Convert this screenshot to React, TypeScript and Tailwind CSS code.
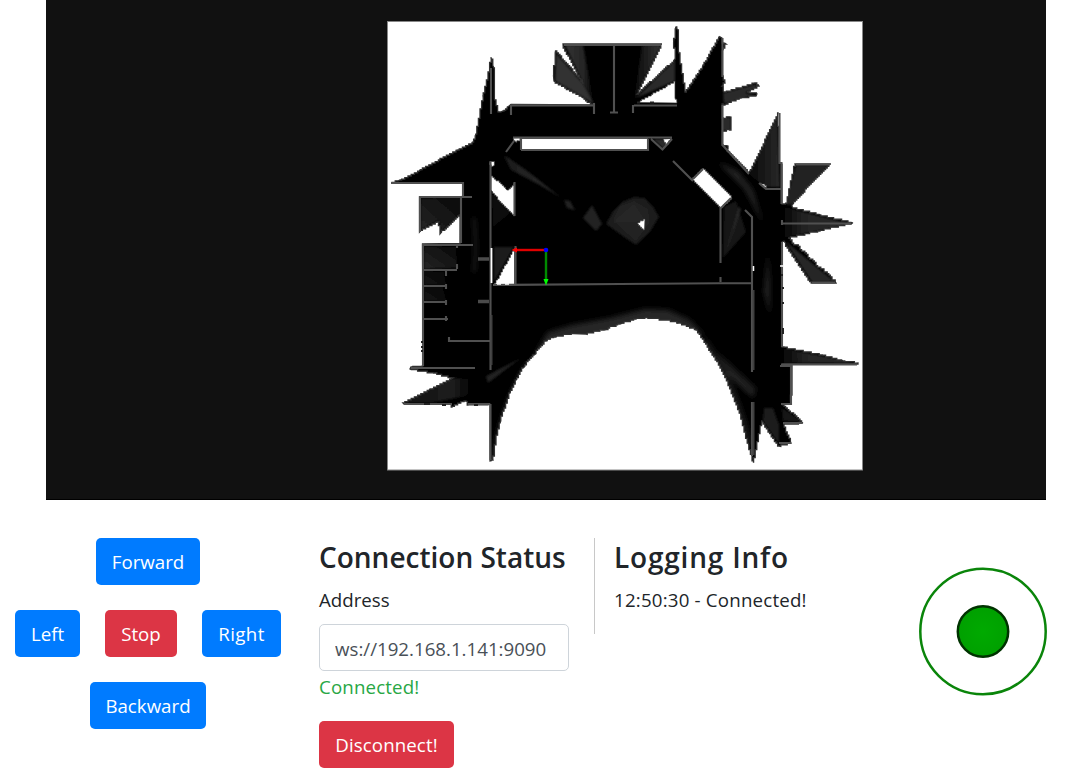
import React from "react";

const CELL = 1.6;

// Turns slanted edges into the stair steps of an occupancy grid.
function toGrid(points: string): string {
  const pts = points.split(" ").map((p) => p.split(",").map(Number));
  const snap = (v: number) => Math.round(v / CELL) * CELL;
  const out: string[] = [];
  pts.forEach(([x0, y0], i) => {
    const [x1, y1] = pts[(i + 1) % pts.length];
    const dx = x1 - x0;
    const dy = y1 - y0;
    out.push(`${x0},${y0}`);
    if (Math.abs(dx) < 1 || Math.abs(dy) < 1) return;
    const n = Math.max(1, Math.round(Math.max(Math.abs(dx), Math.abs(dy)) / CELL));
    let px = x0;
    let py = y0;
    for (let k = 1; k < n; k++) {
      const nx = snap(x0 + (dx * k) / n);
      const ny = snap(y0 + (dy * k) / n);
      out.push(`${nx.toFixed(1)},${py.toFixed(1)}`, `${nx.toFixed(1)},${ny.toFixed(1)}`);
      px = nx;
      py = ny;
    }
    out.push(`${px.toFixed(1)},${py.toFixed(1)}`);
  });
  return out.join(" ");
}

const outline = toGrid(
  "491,58 494,68 495,100 498,112 503,111 509,106 511,104.500 594,105 581,96 554,81 553.500,76 555.500,51 583,83 563,44 662,44 " +
  "637,94 675,59 674,40 676,27 678,30 679,53 685,92 703,65 719,37 722,38 722,43 726,44 722,51 722,76 725,83 722,86 724,92 " +
  "755,83 759,86 747,92 757,93 756,96 741,98 725,105 722,104 722,118 731,117 731,130 722,131 722,145 728,146 727,151 748,173 750,171 " +
  "778,113 779.500,163 782,164 782,204 786,204 795,164 831,164 792,205 793,208 820,215 853,223 820,231 788,238 836,283 812,283 784,241 782,242 " +
  "782,347 820,355 843,361 858,363 858,364 782,364 792,365 791,404 781,404 803,423 783,424 791,443 779,446 762,421 " +
  "753.500,462 748,443 740,413 728,383 720,365 697,330 680,323 668,320 647,317.500 636,319 620,324 604,330 586,334 573,333.500 " +
  "556,337 546,341 534,355 523,368 516,380 510,393 500,423 496,440 493,460 490,461 490,404 468,405 466,401 452,407 450,404 404,404 " +
  "403,403 430,389 453,378 435,373 410,369 411,367 423,366 422.500,244 460,243.500 460,215 440,234 439,222 419.500,232 419.500,197 463,196 463,183 " +
  "391,183 400,180 420,170 458,150 473,142 476,134 483,96 488,75");

const holes = [
  "521,138.500 648,138.500 648,149.500 521,149.500",
  "513,138 521,137.500 520,141 516,142",
  "491,176 507,190 514.500,182 514.500,216 491,190",
  "494,284.500 514.500,248 514.500,284.500",
  "490,161.500 495,161.500 494,166 491,167",
  "703,168.500 732,198.500 721,208 692,179",
  "637,223 645,219 644.500,230",
  "637,102.500 675,81 675,98 677,103",
  "663,139 671,138.500 667,145",
  "760,183 764,184 768,189",
].map(toGrid);

const shade: [string, string, number][] = [
  ["556,53 582,82 594,104 555,81", "#303030", 1],
  ["565,45 583,45 594,104 583,83", "url(#fanL)", 1],
  ["642,45 661,45 637,94 634,100", "url(#fanR)", 1],
  ["636,98 675,60 675,81", "#2c2c2c", 1],
  ["723,93 756,84 757,88 745,93 756,95 724,104", "#292929", 1],
  ["722,118 731,117 731,130 722,131", "#292929", 1],
  ["653,139 664,139 667,145 663,149", "#292929", 1],
  ["777,116 779,163 780,187 765,187 749,174", "url(#wedge)", 1],
  ["796,165 829,165 792,205 785,204", "#222", 1],
  ["784,207 851,224 784,238", "url(#beam)", 1],
  ["785,241 835,282 812,282", "#282828", 1],
  ["783,348 856,363 783,363", "url(#beam)", 1],
  ["421,198 460,197 460,214 441,232 439,220 421,230", "url(#room)", 1],
  ["424,246 456,247 457,268 424,269", "url(#room)", 1],
  ["424,271 444,272 446,285 424,285", "url(#room)", 0.6],
  ["424,287 443,287 446,301 424,301", "url(#room)", 0.6],
  ["494,247 514,247 494,282", "#1e1e1e", 1],
  ["492,193 510,213 493,227", "#0d0d0d", 1],
  ["503,155 509,158 530,173 560,197 538,184 511,170", "url(#ray)", 1],
  ["564,200 570,201 575,210 567,208", "#242424", 1],
  ["583,218 592,205 602,224 596,231", "#222", 1],
  ["724,207 736,201 746,232 723,258", "#171717", 1],
  ["739,207 741,209 725,255", "#2c2c2c", 1],
  ["404,403 430,389 453,378 470,379 473,387 466,396 430,403", "url(#tail)", 1],
  ["486,376 521,358 500,374 488,383", "#202020", 1],
  ["764,408 773,408 779,425 779,444 763,421", "#1f1f1f", 1],
  ["782,408 802,422 783,421", "#181818", 1],
];

const walls = [
  "M511,105.500H593M634,105.500H677",
  "M564,45H661M614,45V112M610,112.500H618",
  "M511,105V115M594,103V114M633,105V113M491,68V114",
  "M513,137.500H672M521,138V150M521,150H648V139M514,141L506,152M651,139L663,150M672,139L662,150",
  "M490.500,161V370M490.500,404V460M514.500,182V216M515.500,246V284",
  "M493,285L620,284L752,283",
  "M391,183H463V197M420,232V197H472M461,197V243M423,366V245H473M457,245V248M457,264V269",
  "M424,270H457M424,286H446M424,302H446M424,319H448M446,271V276M446,284V289M446,300V305M446,316V321",
  "M449,337V341H490M411,368H475M404,404H452M468,404H490",
  "M673,161L693,181M720.500,207V263M720.500,277V282M693,179L703,169M731,198L721,208",
  "M745,210L752,217V372M752,402V456",
  "M722.500,38V77M722.500,105V145L749,174",
  "M779.500,113V163H781.500V204M759,183L766,189H781M782,220V225M782,223.500H851M782,242V347",
  "M796,164.500H830M812,282.500H835M781,364.500H857M780,366H791V404H781M783,423H802M779,443H791",
];

const redBtn = "bg-[#dc3545]";
const blueBtn = "bg-[#007bff]";
const btn =
  "flex h-[47px] items-center justify-center rounded-[5px] pt-0.5 text-[18.7px] text-white";

function OccupancyMap() {
  return (
    <svg viewBox="46 0 1000 500" className="block h-[500px] w-[1000px]">
      <defs>
        <linearGradient id="fanL"><stop offset="0" stopColor="#343434" /><stop offset=".65" stopColor="#252525" /><stop offset="1" stopColor="#000" /></linearGradient>
        <linearGradient id="fanR"><stop offset="0" stopColor="#0a0a0a" /><stop offset="1" stopColor="#333" /></linearGradient>
        <linearGradient id="wedge" x1="1" x2="0"><stop offset="0" stopColor="#292929" /><stop offset="1" stopColor="#080808" /></linearGradient>
        <linearGradient id="beam"><stop offset="0" stopColor="#050505" /><stop offset=".3" stopColor="#242424" /><stop offset="1" stopColor="#2c2c2c" /></linearGradient>
        <linearGradient id="room" x1="0" y1="1" x2="1" y2="0"><stop offset="0" stopColor="#252525" /><stop offset="1" stopColor="#080808" /></linearGradient>
        <linearGradient id="ray"><stop offset="0" stopColor="#161616" /><stop offset=".3" stopColor="#222" /><stop offset="1" stopColor="#2a2a2a" /></linearGradient>
        <linearGradient id="tail"><stop offset="0" stopColor="#111" /><stop offset=".7" stopColor="#1d1d1d" /><stop offset="1" stopColor="#000" /></linearGradient>
        <filter id="soft" x="-20%" y="-20%" width="140%" height="140%"><feGaussianBlur stdDeviation="2.500" /></filter>
        <filter id="slight"><feGaussianBlur stdDeviation=".9" /></filter>
        <clipPath id="body"><polygon points={outline} /></clipPath>
      </defs>
      <rect x="387.500" y="21.500" width="475" height="448.500" fill="#fff" stroke="#888" />
      <polygon points={outline} fill="#000" />
      <g clipPath="url(#body)">
        <g filter="url(#slight)">
          {shade.map(([p, fill, o]) => <polygon key={p} points={p} fill={fill} opacity={o} />)}
        </g>
        <g filter="url(#soft)">
          <path d="M530,362L548,332L572,325L610,318L645,309L668,310L690,320L705,336L690,332L647,322L586,338L548,345Z" fill="#262626" />
          <path d="M717,352L756,388L754,398L728,376Z" fill="#1c1c1c" />
          <path d="M718,162L738,171L753,190L763,224L745,190Z" fill="#222" />
          <path d="M768,252L770,280L770,316L764,292Z" fill="#222" />
          <g fill="none" stroke="#2a2a2a" strokeWidth="3">
            <path d="M492,464Q506,390 530,362M705,340Q736,385 750,445" />
            <path d="M728,371L752,395" strokeWidth="2" />
            <path d="M474,218Q477,248 474,272" strokeWidth="2" />
          </g>
        </g>
        <g filter="url(#slight)">
          <polygon points="606,224 613,211 622,202 634,197 645,198 654,208 659,217 650,232 636,245 624,237" fill="#1b1b1b" />
          <polygon points="613,219 620,206 634,201 648,209 650,222 636,241 622,229" fill="#222" />
          <polygon points="613,222 634,204 644,219 636,222" fill="#282828" />
        </g>
      </g>
      <polygon points={outline} fill="none" stroke="#303030" strokeWidth="1.300" />
      {holes.map((p) => (
        <polygon key={p} points={p} fill="#fff" stroke="#383838" strokeWidth=".7" />
      ))}
      <path d={walls.join("")} fill="none" stroke="#505050" strokeWidth="2.100" />
      <path d="M478,259H489M478,301.500H489" stroke="#4b4b4b" strokeWidth="3.500" />
      <path d="M753.500,402V455M491.500,315V365M753.500,290V370" stroke="#404040" strokeWidth="2" />
      <path d="M491.500,248V283" stroke="#fff" strokeWidth="1.800" />
      <path d="M753.500,266V271M780,266H783M497,284H501M505,284H509" stroke="#fff" strokeWidth="1.500" />
      <path d="M422,341V343M422,346V348M422,350V352M424,404H430M442,405H446M474,405H478M782,274V276M783,287V289M783,302V304M783,328V334M637,102.500H640M650,102.500H654" stroke="#222" strokeWidth="2" />
      <path d="M516,250H544" stroke="#e00000" strokeWidth="2.400" />
      <path d="M511.500,250L517,247.500V252.500Z" fill="#f00" />
      <path d="M546,252V280" stroke="#008a00" strokeWidth="2.400" />
      <path d="M546,285.500L543.500,279H548.500Z" fill="#0f0" />
      <circle cx="546" cy="250" r="2.300" fill="#00f" />
    </svg>
  );
}

export default function App() {
  return (
    <main className="h-[779px] w-[1088px] overflow-hidden bg-white font-['Open_Sans','Noto_Sans',sans-serif] text-[#212529]">
      <section className="ml-[46px] h-[500px] w-[1000px] border-b border-black bg-[#111]">
        <OccupancyMap />
      </section>
      <section className="flex pt-[38px]">
        <div className="ml-[15px] flex w-[266px] shrink-0 flex-col items-center gap-[25px]">
          <button className={`${btn} ${blueBtn} w-[104px]`}>Forward</button>
          <div className="flex gap-[25px]">
            <button className={`${btn} ${blueBtn} w-[65px]`}>Left</button>
            <button className={`${btn} ${redBtn} w-[72px]`}>Stop</button>
            <button className={`${btn} ${blueBtn} w-[79px] tracking-[0.4px]`}>Right</button>
          </div>
          <button className={`${btn} ${blueBtn} w-[116px]`}>Backward</button>
        </div>
        <div className="ml-[38px] w-[250px] shrink-0">
          <h2 className="h-[47px] whitespace-nowrap text-[28px] leading-[38px] font-semibold">Connection Status</h2>
          <label htmlFor="address" className="block h-[39px] text-[18.7px] leading-[29px]">Address</label>
          <input id="address" readOnly value="ws://192.168.1.141:9090" className="block h-[47px] w-[250px] rounded-[5px] border border-[#ced4da] px-[15px] pt-0.5 text-[18.7px] text-[#495057] outline-none" />
          <p className="h-[50px] text-[18.7px] leading-[31px] tracking-[0.15px] text-[#28a745]">Connected!</p>
          <button className={`${btn} ${redBtn} w-[135px] tracking-[0.1px]`}>Disconnect!</button>
        </div>
        <div className="ml-[25px] h-[96px] w-[300px] shrink-0 border-l border-[#c8c8c8] pl-[19px]">
          <h2 className="h-[47px] whitespace-nowrap text-[28px] leading-[38px] font-semibold tracking-[0.8px]">Logging Info</h2>
          <p className="text-[18.7px] leading-[29px] tracking-[0.2px]">12:50:30 - Connected!</p>
        </div>
        <svg viewBox="0 0 130 130" className="mt-[28px] ml-[24px] h-[130px] w-[130px] shrink-0">
          <defs><radialGradient id="stick"><stop offset="0" stopColor="#00aa00" /><stop offset="1" stopColor="#00a000" /></radialGradient></defs>
          <circle cx="65" cy="65.500" r="62.700" fill="none" stroke="#0a850a" strokeWidth="2.500" />
          <circle cx="65" cy="65.500" r="25.200" fill="url(#stick)" stroke="#003300" strokeWidth="2.500" />
        </svg>
      </section>
    </main>
  );
}
